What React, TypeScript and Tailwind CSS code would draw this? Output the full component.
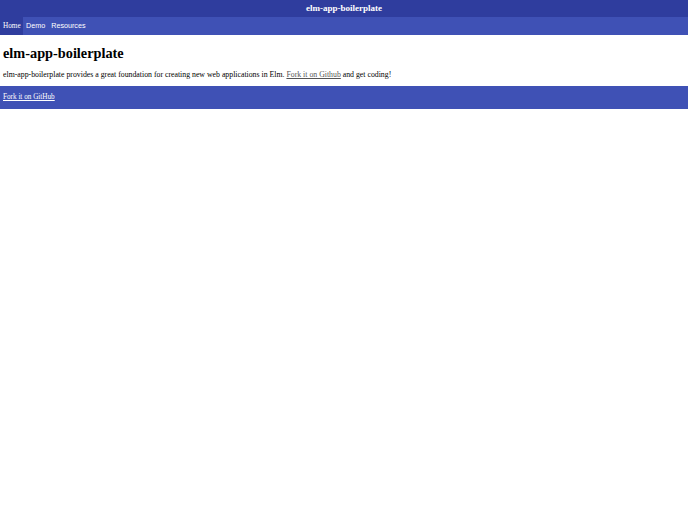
export default function App() {
  return (
    <div className="min-h-screen bg-white font-['Liberation_Serif',serif] text-black">
      <header className="h-[17px] bg-[#2f3d9e] flex items-center justify-center">
        <span className="text-white font-bold text-[9px] leading-none">elm-app-boilerplate</span>
      </header>
      <nav className="h-[18px] bg-[#3f51b5] flex items-stretch text-white text-[7.2px]">
        <a className="bg-[#2f3d9e] w-[23px] pl-[3px] flex items-center">Home</a>
        <a className="pl-[3px] pr-[3px] flex items-center font-['Liberation_Sans',sans-serif]">Demo</a>
        <a className="px-[3px] flex items-center font-['Liberation_Sans',sans-serif]">Resources</a>
      </nav>
      <main className="px-[3px]">
        <h1 className="font-bold text-[14.3px] leading-none pt-[11px]">elm-app-boilerplate</h1>
        <p className="text-[7.8px] leading-none pt-[11px] pb-[7px]">
          elm-app-boilerplate provides a great foundation for creating new web applications in Elm.{" "}
          <a className="underline text-[#555]">Fork it on Github</a> and get coding!
        </p>
      </main>
      <footer className="h-[23px] bg-[#3f51b5] flex items-center px-[3px]">
        <a className="text-white underline text-[7.2px]">Fork it on GitHub</a>
      </footer>
    </div>
  );
}
